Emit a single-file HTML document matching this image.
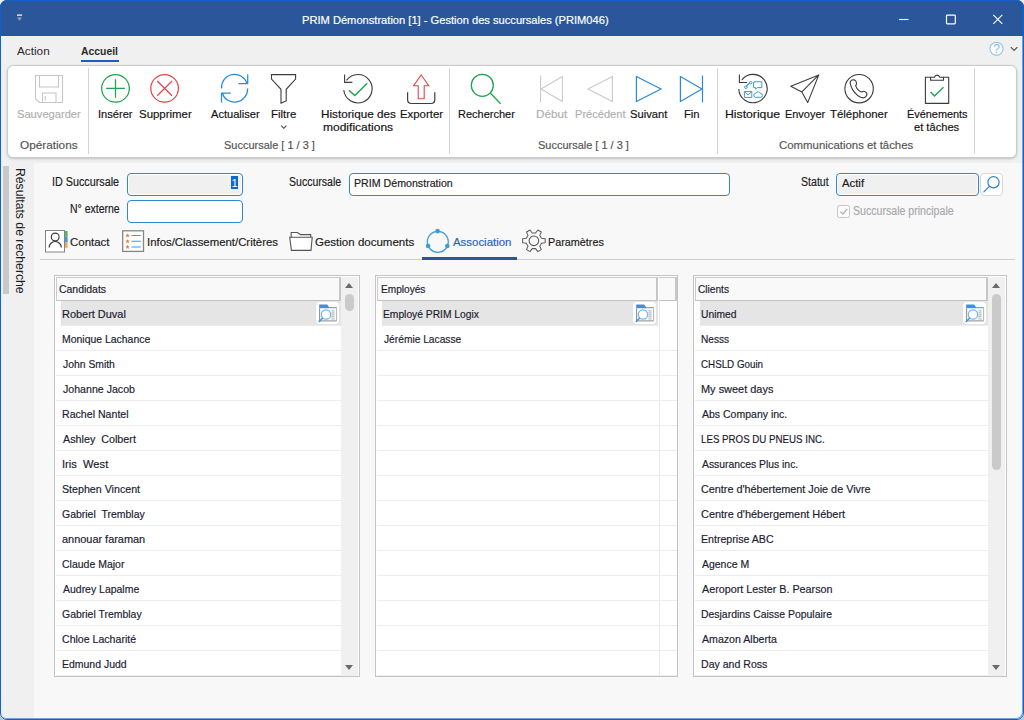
<!DOCTYPE html>
<html lang="fr"><head><meta charset="utf-8"><title>PRIM Démonstration [1] - Gestion des succursales (PRIM046)</title>
<style>
*{box-sizing:border-box;margin:0;padding:0}
html,body{width:1024px;height:720px;overflow:hidden;background:linear-gradient(#ecece8 0,#ecece8 50%,#c4c4c4 50%,#c4c4c4 100%)}
body{font-family:"Liberation Sans",sans-serif;font-size:12px;color:#1e1e1e;position:relative}
#win{position:absolute;left:0;top:0;width:1024px;height:720px;background:#f0f0f0;border-radius:7px;overflow:hidden}
#frame{position:absolute;left:0;top:0;width:1024px;height:720px;border:1px solid #0d62cc;border-radius:7px;box-shadow:inset -1px -1px 0 rgba(13,98,204,.55);pointer-events:none;z-index:50}
#title{position:absolute;left:0;top:0;width:1024px;height:36px;background:#2b579a}
.abs{position:absolute}
.tx{position:absolute;white-space:pre;z-index:10;transform-origin:0 0;-webkit-text-stroke:.18px currentColor}
.ttl{font-size:11.4px;line-height:16px;color:#fff}
.tab{font-size:11.4px;line-height:16px;color:#2a2a2a;-webkit-text-stroke:0}
#ribbon{position:absolute;left:7px;top:65px;width:1010px;height:93px;background:#fff;border:1px solid #cbcbcb;border-radius:6px;box-shadow:0 1px 2.5px rgba(0,0,0,.2)}
.sep{position:absolute;top:68px;width:1px;height:86px;background:#d4d4d4}
.rb{font-size:11.4px;line-height:13px;color:#141414}
.rb.dis{color:#b0b0b0}
.gl{font-size:11.4px;line-height:14px;color:#555}
#main{position:absolute;left:34px;top:163px;width:990px;height:555px;background:#f8f8f8}
.lbl{font-size:12px;line-height:14px;color:#1c1c1c}
.itx{font-size:11.2px;line-height:14px;color:#1c1c1c}
.inp{position:absolute;height:23px;border:1px solid #2f87d0;border-radius:4px;background:#fff;box-shadow:inset 0 0 0 1px #fff}
.ptab{font-size:11.4px;line-height:14px;color:#1c1c1c}
.grid{position:absolute;top:275px;height:402px;border:1px solid #c4c4c4;background:#fff;overflow:hidden}
.gh{position:absolute;left:1px;top:1px;height:24px;border:1px solid #cbcbcb;border-bottom-color:#c2c2c2;border-right:2px solid #c6c6c6;background:#f9f9f9}
.gtx{font-size:11.2px;line-height:14px;color:#1c1c30}
.row{position:absolute;left:1px;height:25px;border-bottom:1px solid #ededed}
.row.sel{background:#e5e5e5;left:6px;border-bottom:1px solid #ececec}
.sb{position:absolute;top:1px;width:17px;height:399px;background:#f0f0f0}
.btn{position:absolute;width:23px;height:22.8px;border-radius:4px;background:#fff;box-shadow:0 0 0 .5px #e2e2e2}
#side{left:27.1px;top:168.2px;transform-origin:0 0;transform:rotate(90deg) scaleX(.94);font-size:13px;line-height:14px;white-space:nowrap;color:#1c1c1c}
.bi{position:absolute;left:0;top:0}
.arr{position:absolute;left:4px;width:0;height:0;border-left:4.5px solid transparent;border-right:4.5px solid transparent}
.arr.up{top:6px;border-bottom:5px solid #6a6a6a}
.arr.dn{bottom:6px;border-top:5px solid #6a6a6a}
.thumb{position:absolute;left:4px;top:17px;width:9px;border-radius:4.5px;background:#cacaca}
</style></head><body>
<div id="win">
<div id="title"></div>
<div id="tt" class="tx ttl" style="left:301.57px;top:12.1px;transform:scaleX(0.9765)">PRIM Démonstration [1] - Gestion des succursales (PRIM046)</div><div id="ta" class="tx tab" style="left:17.03px;top:43px;transform:scaleX(1.0317)">Action</div><div id="tb" class="tx tab" style="left:81.31px;top:43px;transform:scaleX(0.9133);font-weight:bold">Accueil</div><div class="abs" style="left:81px;top:60px;width:38px;height:2px;background:#1a5fc8"></div>
<div id="ribbon"></div>
<div class="sep" style="left:88px"></div><div class="sep" style="left:449px"></div><div class="sep" style="left:717px"></div><div class="sep" style="left:974px"></div><div id="r1" class="tx rb dis" style="left:16.94px;top:107.5px;transform:scaleX(0.9774)">Sauvegarder</div><div id="r2" class="tx rb" style="left:97.93px;top:107.5px;transform:scaleX(0.9748)">Insérer</div><div id="r3" class="tx rb" style="left:138.74px;top:107.5px;transform:scaleX(1.0043)">Supprimer</div><div id="r4" class="tx rb" style="left:211.10px;top:107.5px;transform:scaleX(0.9734)">Actualiser</div><div id="r5" class="tx rb" style="left:271.19px;top:107.5px;transform:scaleX(1.0024)">Filtre</div><div id="r6" class="tx rb" style="left:321.05px;top:107.5px;transform:scaleX(1.0266)">Historique des</div><div id="r6b" class="tx rb" style="left:322.53px;top:120.5px;transform:scaleX(1.0547)">modifications</div><div id="r7" class="tx rb" style="left:400.26px;top:107.5px;transform:scaleX(0.9995)">Exporter</div><div id="r8" class="tx rb" style="left:457.97px;top:107.5px;transform:scaleX(0.9660)">Rechercher</div><div id="r9" class="tx rb dis" style="left:536.16px;top:107.5px;transform:scaleX(1.0240)">Début</div><div id="r10" class="tx rb dis" style="left:574.80px;top:107.5px;transform:scaleX(0.9723)">Précédent</div><div id="r11" class="tx rb" style="left:630.48px;top:107.5px;transform:scaleX(0.9834)">Suivant</div><div id="r12" class="tx rb" style="left:683.97px;top:107.5px;transform:scaleX(0.9874)">Fin</div><div id="r13" class="tx rb" style="left:725.30px;top:107.5px;transform:scaleX(1.0728)">Historique</div><div id="r14" class="tx rb" style="left:784.80px;top:107.5px;transform:scaleX(0.9597)">Envoyer</div><div id="r15" class="tx rb" style="left:830.31px;top:107.5px;transform:scaleX(1.0020)">Téléphoner</div><div id="r16" class="tx rb" style="left:906.82px;top:107.5px;transform:scaleX(0.9564)">Événements</div><div id="r16b" class="tx rb" style="left:914.37px;top:120.5px;transform:scaleX(0.9765)">et tâches</div><div id="g1" class="tx gl" style="left:20.01px;top:137.7px;transform:scaleX(1.0331)">Opérations</div><div id="g2" class="tx gl" style="left:224.31px;top:137.7px;transform:scaleX(0.9635)">Succursale [ 1 / 3 ]</div><div id="g3" class="tx gl" style="left:538.21px;top:137.7px;transform:scaleX(0.9635)">Succursale [ 1 / 3 ]</div><div id="g4" class="tx gl" style="left:779.21px;top:137.7px;transform:scaleX(1.0001)">Communications et tâches</div>
<div id="main"></div>
<div class="abs" style="left:3px;top:166px;width:6px;height:128px;background:#c9c9c9"></div>
<div id="side" class="abs">Résultats de recherche</div>
<div id="l1" class="tx lbl" style="left:52.11px;top:174.7px;transform:scaleX(0.8982)">ID Succursale</div><div id="l2" class="tx lbl" style="left:69.70px;top:201.79999999999998px;transform:scaleX(0.8730)">N° externe</div><div id="l3" class="tx lbl" style="left:288.59px;top:174.7px;transform:scaleX(0.8791)">Succursale</div><div id="l4" class="tx lbl" style="left:801.19px;top:174.7px;transform:scaleX(0.8822)">Statut</div><div id="l5" class="tx lbl" style="left:852.95px;top:204.25px;transform:scaleX(0.8823);color:#a9a9ae">Succursale principale</div>
<div class="inp" style="left:127px;top:173px;width:116px;background:#f0f0f0"><span class="abs" style="left:103px;top:2px;width:7px;height:13px;background:#0a68d4;color:#fff;line-height:14px;text-align:center;font-size:11.2px">1</span></div>
<div class="inp" style="left:127px;top:200px;width:116px"></div>
<div class="inp" style="left:349px;top:173px;width:381px"></div>
<div class="inp" style="left:836px;top:173px;width:143px;background:#f0f0f0"></div>
<div id="i3" class="tx itx" style="left:353.62px;top:175.9px;transform:scaleX(0.9511)">PRIM Démonstration</div><div id="i4" class="tx itx" style="left:842.02px;top:175.9px;transform:scaleX(1.0121)">Actif</div><div class="btn" style="left:980px;top:173px;width:23px;height:23px;border:1px solid #d8d8d8;border-radius:4px;box-shadow:none"><svg class="abs" style="left:0;top:0" width="21" height="21" viewBox="0 0 21 21" fill="none" stroke="#2f7fd0" stroke-width="1.2"><circle cx="12.5" cy="8.3" r="5.6"/><path d="M8.4 12.3L2.6 18.2"/></svg></div>
<div class="abs" style="left:837px;top:205px;width:13px;height:13px;border:1px solid #c6c6c6;border-radius:2.5px;background:#fbfbfb"><svg class="abs" style="left:0;top:0" width="11" height="11" viewBox="0 0 11 11" fill="none" stroke="#b4b4b4" stroke-width="1.3"><path d="M2.3 5.6L4.8 8L9.2 2.8"/></svg></div>
<div id="p1" class="tx ptab" style="left:69.91px;top:234.75px;transform:scaleX(1.0075)">Contact</div><div id="p2" class="tx ptab" style="left:147.23px;top:234.75px;transform:scaleX(0.9998)">Infos/Classement/Critères</div><div id="p3" class="tx ptab" style="left:315.21px;top:234.75px;transform:scaleX(1.0108)">Gestion documents</div><div id="p4" class="tx ptab" style="left:452.72px;top:234.75px;transform:scaleX(1.0030);color:#2a62c4">Association</div><div id="p5" class="tx ptab" style="left:547.52px;top:234.75px;transform:scaleX(0.9488)">Paramètres</div>
<div class="abs" style="left:40px;top:259px;width:975px;height:1px;background:#cdcdcd"></div>
<div class="abs" style="left:422px;top:257px;width:95px;height:3px;background:#2b579a"></div>
<div class="grid" style="left:54px;width:306px"><div class="gh" style="width:285px"></div><div class="row sel" style="top:25px;width:280px"><div class="btn" style="left:254.7px;top:.6px"><svg class="bi" width="23" height="23" viewBox="0 0 23 23"><path d="M3.2 2.6H11.2L13.1 5.2H20.9V6.5H3.2Z" fill="#3f8fdc"/><rect x="3.3" y="6.4" width="17.6" height="12.8" fill="#fcfcfc"/><path d="M3.6 6.4V18.9H20.7" fill="none" stroke="#8a8a8a" stroke-width="1"/><path d="M20.6 6.4V18.9" fill="none" stroke="#b4b4b4" stroke-width="1"/><path d="M15.4 8.9H18.6M15.4 10.9H18.6M15.4 12.9H18.6M15.4 14.8H18.6M15.4 16.9H18.6" stroke="#a2a2a2" stroke-width=".9"/><circle cx="10" cy="12.5" r="4.7" fill="#fff" stroke="#76b8ea" stroke-width="1.2"/><path d="M6.7 16L2.7 20" stroke="#3a90d8" stroke-width="1.3"/></svg></div></div><div class="row" style="top:50px;width:286px"></div><div class="row" style="top:75px;width:286px"></div><div class="row" style="top:100px;width:286px"></div><div class="row" style="top:125px;width:286px"></div><div class="row" style="top:150px;width:286px"></div><div class="row" style="top:175px;width:286px"></div><div class="row" style="top:200px;width:286px"></div><div class="row" style="top:225px;width:286px"></div><div class="row" style="top:250px;width:286px"></div><div class="row" style="top:275px;width:286px"></div><div class="row" style="top:300px;width:286px"></div><div class="row" style="top:325px;width:286px"></div><div class="row" style="top:350px;width:286px"></div><div class="row" style="top:375px;width:286px"></div><div class="sb" style="left:286px"><div class="arr up"></div><div class="thumb" style="height:17px"></div><div class="arr dn"></div></div></div>
<div id="h1" class="tx gtx" style="left:59.24px;top:281.9px;transform:scaleX(0.9341)">Candidats</div><div id="c0" class="tx gtx" style="left:61.87px;top:306.9px;transform:scaleX(0.9776)">Robert Duval</div><div id="c1" class="tx gtx" style="left:61.98px;top:331.9px;transform:scaleX(0.9331)">Monique Lachance</div><div id="c2" class="tx gtx" style="left:62.84px;top:356.9px;transform:scaleX(0.9272)">John Smith</div><div id="c3" class="tx gtx" style="left:62.69px;top:381.9px;transform:scaleX(0.9479)">Johanne Jacob</div><div id="c4" class="tx gtx" style="left:62.22px;top:406.9px;transform:scaleX(0.9473)">Rachel Nantel</div><div id="c5" class="tx gtx" style="left:62.55px;top:431.9px;transform:scaleX(0.9608)">Ashley &nbsp;Colbert</div><div id="c6" class="tx gtx" style="left:61.74px;top:456.9px;transform:scaleX(0.9964)">Iris &nbsp;West</div><div id="c7" class="tx gtx" style="left:61.78px;top:481.9px;transform:scaleX(0.9526)">Stephen Vincent</div><div id="c8" class="tx gtx" style="left:62.01px;top:506.9px;transform:scaleX(0.9348)">Gabriel &nbsp;Tremblay</div><div id="c9" class="tx gtx" style="left:62.20px;top:531.9px;transform:scaleX(0.9764)">annouar faraman</div><div id="c10" class="tx gtx" style="left:61.99px;top:556.9px;transform:scaleX(0.9375)">Claude Major</div><div id="c11" class="tx gtx" style="left:63.30px;top:581.9px;transform:scaleX(0.9357)">Audrey Lapalme</div><div id="c12" class="tx gtx" style="left:61.96px;top:606.9px;transform:scaleX(0.9348)">Gabriel Tremblay</div><div id="c13" class="tx gtx" style="left:61.91px;top:631.9px;transform:scaleX(0.9453)">Chloe Lacharité</div><div id="c14" class="tx gtx" style="left:62.49px;top:656.9px;transform:scaleX(0.9356)">Edmund Judd</div><div class="grid" style="left:375px;width:303px"><div class="gh" style="width:281px;border-right:2px solid #c6c6c6"></div><div class="gh" style="left:283px;width:18px;border-left:none"></div><div class="abs" style="left:283px;top:25px;width:1px;height:375px;background:#e9e9e9;z-index:3"></div><div class="row sel" style="top:25px;width:276px"><div class="btn" style="left:250.7px;top:.6px"><svg class="bi" width="23" height="23" viewBox="0 0 23 23"><path d="M3.2 2.6H11.2L13.1 5.2H20.9V6.5H3.2Z" fill="#3f8fdc"/><rect x="3.3" y="6.4" width="17.6" height="12.8" fill="#fcfcfc"/><path d="M3.6 6.4V18.9H20.7" fill="none" stroke="#8a8a8a" stroke-width="1"/><path d="M20.6 6.4V18.9" fill="none" stroke="#b4b4b4" stroke-width="1"/><path d="M15.4 8.9H18.6M15.4 10.9H18.6M15.4 12.9H18.6M15.4 14.8H18.6M15.4 16.9H18.6" stroke="#a2a2a2" stroke-width=".9"/><circle cx="10" cy="12.5" r="4.7" fill="#fff" stroke="#76b8ea" stroke-width="1.2"/><path d="M6.7 16L2.7 20" stroke="#3a90d8" stroke-width="1.3"/></svg></div></div><div class="row" style="top:50px;width:301px"></div><div class="row" style="top:75px;width:301px"></div><div class="row" style="top:100px;width:301px"></div><div class="row" style="top:125px;width:301px"></div><div class="row" style="top:150px;width:301px"></div><div class="row" style="top:175px;width:301px"></div><div class="row" style="top:200px;width:301px"></div><div class="row" style="top:225px;width:301px"></div><div class="row" style="top:250px;width:301px"></div><div class="row" style="top:275px;width:301px"></div><div class="row" style="top:300px;width:301px"></div><div class="row" style="top:325px;width:301px"></div><div class="row" style="top:350px;width:301px"></div><div class="row" style="top:375px;width:301px"></div></div>
<div id="h2" class="tx gtx" style="left:380.73px;top:281.9px;transform:scaleX(0.9036)">Employés</div><div id="e0" class="tx gtx" style="left:383.07px;top:306.9px;transform:scaleX(0.9179)">Employé PRIM Logix</div><div id="e1" class="tx gtx" style="left:383.83px;top:331.9px;transform:scaleX(0.9134)">Jérémie Lacasse</div><div class="grid" style="left:693px;width:314px"><div class="gh" style="width:293px"></div><div class="row sel" style="top:25px;width:288px"><div class="btn" style="left:262.7px;top:.6px"><svg class="bi" width="23" height="23" viewBox="0 0 23 23"><path d="M3.2 2.6H11.2L13.1 5.2H20.9V6.5H3.2Z" fill="#3f8fdc"/><rect x="3.3" y="6.4" width="17.6" height="12.8" fill="#fcfcfc"/><path d="M3.6 6.4V18.9H20.7" fill="none" stroke="#8a8a8a" stroke-width="1"/><path d="M20.6 6.4V18.9" fill="none" stroke="#b4b4b4" stroke-width="1"/><path d="M15.4 8.9H18.6M15.4 10.9H18.6M15.4 12.9H18.6M15.4 14.8H18.6M15.4 16.9H18.6" stroke="#a2a2a2" stroke-width=".9"/><circle cx="10" cy="12.5" r="4.7" fill="#fff" stroke="#76b8ea" stroke-width="1.2"/><path d="M6.7 16L2.7 20" stroke="#3a90d8" stroke-width="1.3"/></svg></div></div><div class="row" style="top:50px;width:294px"></div><div class="row" style="top:75px;width:294px"></div><div class="row" style="top:100px;width:294px"></div><div class="row" style="top:125px;width:294px"></div><div class="row" style="top:150px;width:294px"></div><div class="row" style="top:175px;width:294px"></div><div class="row" style="top:200px;width:294px"></div><div class="row" style="top:225px;width:294px"></div><div class="row" style="top:250px;width:294px"></div><div class="row" style="top:275px;width:294px"></div><div class="row" style="top:300px;width:294px"></div><div class="row" style="top:325px;width:294px"></div><div class="row" style="top:350px;width:294px"></div><div class="row" style="top:375px;width:294px"></div><div class="sb" style="left:294px"><div class="arr up"></div><div class="thumb" style="height:176px"></div><div class="arr dn"></div></div></div>
<div id="h3" class="tx gtx" style="left:698.27px;top:281.9px;transform:scaleX(0.9052)">Clients</div><div id="k0" class="tx gtx" style="left:701.02px;top:306.9px;transform:scaleX(0.9179)">Unimed</div><div id="k1" class="tx gtx" style="left:701.40px;top:331.9px;transform:scaleX(0.9038)">Nesss</div><div id="k2" class="tx gtx" style="left:701.41px;top:356.9px;transform:scaleX(0.8748)">CHSLD Gouin</div><div id="k3" class="tx gtx" style="left:701.25px;top:381.9px;transform:scaleX(0.9782)">My sweet days</div><div id="k4" class="tx gtx" style="left:702.31px;top:406.9px;transform:scaleX(0.9392)">Abs Company inc.</div><div id="k5" class="tx gtx" style="left:701.27px;top:431.9px;transform:scaleX(0.8688)">LES PROS DU PNEUS INC.</div><div id="k6" class="tx gtx" style="left:702.37px;top:456.9px;transform:scaleX(0.9264)">Assurances Plus inc.</div><div id="k7" class="tx gtx" style="left:701.22px;top:481.9px;transform:scaleX(0.9667)">Centre d'hébertement Joie de Vivre</div><div id="k8" class="tx gtx" style="left:701.42px;top:506.9px;transform:scaleX(0.9758)">Centre d'hébergement Hébert</div><div id="k9" class="tx gtx" style="left:701.22px;top:531.9px;transform:scaleX(0.9485)">Entreprise ABC</div><div id="k10" class="tx gtx" style="left:702.23px;top:556.9px;transform:scaleX(0.9352)">Agence M</div><div id="k11" class="tx gtx" style="left:701.55px;top:581.9px;transform:scaleX(0.9626)">Aeroport Lester B. Pearson</div><div id="k12" class="tx gtx" style="left:700.60px;top:606.9px;transform:scaleX(0.9326)">Desjardins Caisse Populaire</div><div id="k13" class="tx gtx" style="left:702.27px;top:631.9px;transform:scaleX(0.9479)">Amazon Alberta</div><div id="k14" class="tx gtx" style="left:701.22px;top:656.9px;transform:scaleX(0.9443)">Day and Ross</div><svg id="icons" class="abs" style="left:0;top:0;z-index:20;pointer-events:none" width="1024" height="720" viewBox="0 0 1024 720" fill="none" stroke-width="1.2" stroke-linecap="butt" stroke-linejoin="miter">
<!-- title bar -->
<g stroke="#fff" stroke-width="1.1">
<path d="M899 19.5H908.5"/>
<rect x="946.5" y="15.1" width="8.8" height="8.8" rx=".8" stroke-width="1.2"/>
<path d="M993.3 14.8L1002.3 23.9M1002.3 14.8L993.3 23.9"/>
</g>
<g stroke="none"><rect x="17" y="14.3" width="5" height="1.7" fill="#d6d0c4"/><path d="M17 17.6h5l-2.5 3.1z" fill="#a9a195"/></g>
<!-- help -->
<circle cx="996.5" cy="48.8" r="6.6" stroke="#8cc4e8" stroke-width="1.1" fill="#fff"/>
<path d="M1010.8 47.2l3.3 3.3 3.3-3.3" stroke="#555" stroke-width="1.2"/>
<!-- save -->
<g stroke="#c6c6c6" stroke-width="1.1">
<path d="M35.5 75.5H62.5V102.5H39.3L35.5 98.7Z"/>
<path d="M39.5 75.5V87H58.5V75.5"/>
<path d="M42.5 102.5V93H56V102.5"/>
<path d="M45.3 96V100.5"/>
</g>
<!-- insert -->
<g stroke="#1da44c" stroke-width="1.25">
<circle cx="115.5" cy="88.4" r="13.8"/>
<path d="M106.1 88.4H124.9M115.5 79.2V97.7"/>
</g>
<!-- delete -->
<g stroke="#e9434b" stroke-width="1.25">
<circle cx="164.6" cy="88.4" r="13.8"/>
<path d="M157.2 81L172 95.8M172 81L157.2 95.8"/>
</g>
<!-- refresh -->
<g stroke="#2b8bd9" stroke-width="1.25">
<path d="M221.6 88.4A13 13 0 0 1 247 83.6"/>
<path d="M247.7 74.3V83.7H238.4"/>
<path d="M247.6 88.4A13 13 0 0 1 222.2 93"/>
<path d="M221.5 102.6V93H230.8"/>
</g>
<!-- filter -->
<path d="M271.5 74.6H295.6V79L286.2 89.3V100.9L281 103.1V89.3L271.5 79Z" stroke="#3c3c3c" stroke-width="1.1"/>
<path d="M281.2 125.6L283.8 128.3L286.4 125.6" stroke="#444" stroke-width="1.1"/>
<!-- history modifications -->
<g stroke="#3c3c3c" stroke-width="1.1">
<path d="M346.5 80.3A14.2 14.2 0 1 1 343.8 90"/>
<path d="M344.6 74.6V82.4H352.4"/>
</g>
<path d="M349 90.4L354.8 95.5L367.2 83.2" stroke="#1da44c" stroke-width="1.4"/>
<!-- export -->
<path d="M421.2 75L428.8 85.7H424.2V98.8H418.2V85.7H413.6Z" stroke="#e9434b" stroke-width="1.1"/>
<path d="M407.6 92.3V99.5Q407.6 103.5 411.6 103.5H430.8Q434.8 103.5 434.8 99.5V92.3" stroke="#3c3c3c" stroke-width="1.2"/>
<!-- search -->
<g stroke="#1da44c" stroke-width="1.25">
<circle cx="482.3" cy="85.3" r="11"/>
<path d="M490.3 93L500.6 103.7"/>
</g>
<!-- nav -->
<g stroke="#cacaca" stroke-width="1.1">
<path d="M540.6 75.5V102.5M562.4 76.5L541 89L562.4 101.5Z"/>
<path d="M612.4 76.5L588 89L612.4 101.5Z"/>
</g>
<g stroke="#2b8bd9" stroke-width="1.2">
<path d="M636.4 76.5L661 89L636.4 101.5Z"/>
<path d="M702.5 75.5V102.5M680.4 76.5L702 89L680.4 101.5Z"/>
</g>
<!-- history comm -->
<g stroke="#3c3c3c" stroke-width="1.1">
<path d="M741.8 79.8A14.2 14.2 0 1 1 738.8 89"/>
<path d="M739.4 74.4V82.5H747.1"/>
</g>
<g stroke="#3d9bdc" stroke-width="1">
<path d="M753.6 81.8H761.8V87.6H757.2L755.6 89.2V87.6H753.6Z"/>
<path d="M744.4 91.5H751.8V97.4H744.4ZM744.4 91.7L748.1 94.8L751.8 91.7"/>
<path d="M755.3 97.3H760.6A1.9 1.9 0 0 0 760.6 93.5A2.6 2.6 0 0 0 755.9 93.2A2.1 2.1 0 0 0 755.3 97.3Z"/>
<path d="M746.2 86.4L750 82.8" stroke-width="1.3"/><circle cx="745.9" cy="87.2" r="1.3"/><circle cx="750.7" cy="82.6" r="1.2"/>
</g>
<!-- send -->
<path d="M818.8 74.9L790.8 86.3L801.8 91.9L807.7 102.6ZM818.8 74.9L801.8 91.9" stroke="#3c3c3c" stroke-width="1.1" stroke-linejoin="round"/>
<!-- phone -->
<g stroke="#3c3c3c" stroke-width="1.1">
<circle cx="859.1" cy="88.7" r="14.2"/>
<path d="M850.3 81.5Q851 79.9 852.7 79.7L854.6 79.9Q856.3 80.6 856.5 83.2Q856.6 84.8 855.6 85.6Q856.6 88.6 858.7 90.4Q860.4 91.9 862 92Q863.4 91 864.6 91.4Q866.4 92.2 866.8 93.6Q867.2 95.4 866 96.4Q864.8 97.9 863.2 97.9Q860.6 97.8 858 95.8Q854.6 93 852.6 89.6Q850.8 86.4 850.4 84Q850 82.4 850.3 81.5Z"/>
</g>
<!-- clipboard -->
<g stroke="#3c3c3c" stroke-width="1.1">
<path d="M930.6 77.2H925.4V103.4H948.7V77.2H943.5"/>
<path d="M930.6 80.3V77.2H934.6A2.6 2.6 0 0 1 939.7 77.2H943.5V80.3Z"/>
</g>
<path d="M930.6 92L934.5 96L943.5 87.3" stroke="#1da44c" stroke-width="1.4"/>

<!-- contact -->
<rect x="45.5" y="230.5" width="19" height="21.5" fill="#fff" stroke="#858585" stroke-width="1"/>
<rect x="65" y="231" width="2.6" height="5.8" fill="#4cb86a" stroke="none"/>
<rect x="65" y="236.8" width="2.6" height="5.6" fill="#4a94d8" stroke="none"/>
<rect x="65" y="242.4" width="2.6" height="5.4" fill="#f0a850" stroke="none"/>
<g stroke="#3c3c3c" stroke-width="1.2"><circle cx="55.2" cy="237" r="3.9"/><path d="M49.1 247.6A6.1 6.1 0 0 1 61.3 247.6"/></g>
<!-- infos -->
<rect x="122.7" y="230.8" width="20.8" height="20.6" fill="#fff" stroke="#858585" stroke-width="1.3"/>
<path d="M127.6 233.3L128.2 234.8L129.8 234.9L128.6 235.9L129.0 237.5L127.6 236.6L126.2 237.5L126.6 235.9L125.4 234.9L127.0 234.8ZM127.6 239.0L128.2 240.5L129.8 240.6L128.6 241.6L129.0 243.2L127.6 242.3L126.2 243.2L126.6 241.6L125.4 240.6L127.0 240.5ZM127.6 244.7L128.2 246.2L129.8 246.3L128.6 247.3L129.0 248.9L127.6 248.0L126.2 248.9L126.6 247.3L125.4 246.3L127.0 246.2Z" fill="#e8783a" stroke="none"/>
<path d="M131.4 235.5H140.8M131.4 241.2H140.8M131.4 247H140.8" stroke="#3d9bdc" stroke-width="1.1"/>
<!-- folder -->
<g stroke="#555" stroke-width="1.1" fill="#fff">
<path d="M291.2 237.3V232.5H297.6L300.4 234.6H310.7V237.3"/>
<path d="M289.7 237.3H312.2L311 250.4H291.4Z"/>
</g>
<!-- association -->
<circle cx="437.8" cy="241.8" r="10.5" stroke="#3d9bdc" stroke-width="1.2"/>
<g fill="#3d9bdc" stroke="none"><circle cx="437.6" cy="231.1" r="2.3"/><circle cx="428.1" cy="246" r="2.3"/><circle cx="447.3" cy="246" r="2.3"/></g>
<!-- gear -->
<path d="M541.5 238.3L545.2 238.8L545.2 242.8L541.5 243.3L539.8 246.2L541.3 249.6L537.8 251.6L535.6 248.6L532.2 248.6L530.0 251.6L526.5 249.6L528.0 246.2L526.3 243.3L522.6 242.8L522.6 238.8L526.3 238.3L528.0 235.4L526.5 232.0L530.0 230.0L532.2 233.0L535.6 233.0L537.8 230.0L541.3 232.0L539.8 235.4Z" stroke="#5e5e5e" stroke-width="1.05" stroke-linejoin="round"/>
<circle cx="533.9" cy="240.8" r="4.8" stroke="#585858" stroke-width="1.1"/>
</svg>
<div class="abs" style="left:992.5px;top:41.8px;width:8px;text-align:center;font-size:12px;line-height:14px;color:#7abbe6;z-index:21">?</div>
</div>
<div id="frame"></div>
</body></html>
